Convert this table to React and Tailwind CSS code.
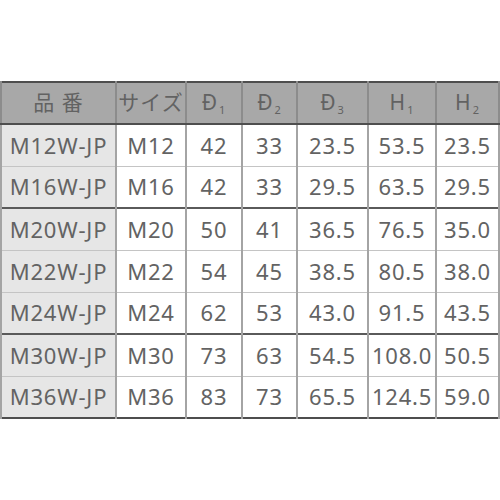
const HEAD = [
  { t: '品 番' },
  { t: 'サイズ' },
  { t: 'Đ', s: '1' },
  { t: 'Đ', s: '2' },
  { t: 'Đ', s: '3' },
  { t: 'H', s: '1' },
  { t: 'H', s: '2' },
];

const ROWS = [
  ['M12W-JP', 'M12', '42', '33', '23.5', '53.5', '23.5'],
  ['M16W-JP', 'M16', '42', '33', '29.5', '63.5', '29.5'],
  ['M20W-JP', 'M20', '50', '41', '36.5', '76.5', '35.0'],
  ['M22W-JP', 'M22', '54', '45', '38.5', '80.5', '38.0'],
  ['M24W-JP', 'M24', '62', '53', '43.0', '91.5', '43.5'],
  ['M30W-JP', 'M30', '73', '63', '54.5', '108.0', '50.5'],
  ['M36W-JP', 'M36', '83', '73', '65.5', '124.5', '59.0'],
];

// rows that open a new group get a dark top rule
const GROUP_START = [2, 5];

const COLS = ['w-[115px]', 'w-[70px]', 'w-[56px]', 'w-[55px]', 'w-[71px]', 'w-[68px]', 'w-[63px]'];

export default function App() {
  return (
    <div
      className="w-[500px] h-[500px] bg-white pt-[81px]"
      style={{ fontFamily: '"Noto Sans", "Noto Sans CJK JP", sans-serif' }}
    >
      <table className="table-fixed border-collapse w-[498px] border-2 border-[#4e4e4e] text-[#636363]">
        <colgroup>
          {COLS.map((c, i) => (
            <col key={i} className={c} />
          ))}
        </colgroup>
        <thead>
          <tr className="h-[42px] bg-[#a8a8a8]">
            {HEAD.map((h, i) => (
              <th
                key={i}
                className="font-normal text-[21px] tracking-[1px] text-center text-[#626262] border-x-2 border-x-[#8c8c8c] border-b-2 border-b-[#4e4e4e] p-0"
              >
                {h.t}
                {h.s && <span className="text-[11px] align-[-4px] ml-[1px]">{h.s}</span>}
              </th>
            ))}
          </tr>
        </thead>
        <tbody>
          {ROWS.map((row, r) => (
            <tr
              key={r}
              className={`h-[42px] ${GROUP_START.includes(r) ? 'border-t-2 border-t-[#5a5a5a]' : 'border-t border-t-[#c4c4c4]'}`}
            >
              {row.map((v, i) => (
                <td
                  key={i}
                  className={`text-[22px] tracking-[0.8px] text-center p-0 border-x-2 border-x-[#a4a4a4] ${i === 0 ? 'bg-[#e6e6e6]' : 'bg-white'}`}
                >
                  {v}
                </td>
              ))}
            </tr>
          ))}
        </tbody>
      </table>
    </div>
  );
}
